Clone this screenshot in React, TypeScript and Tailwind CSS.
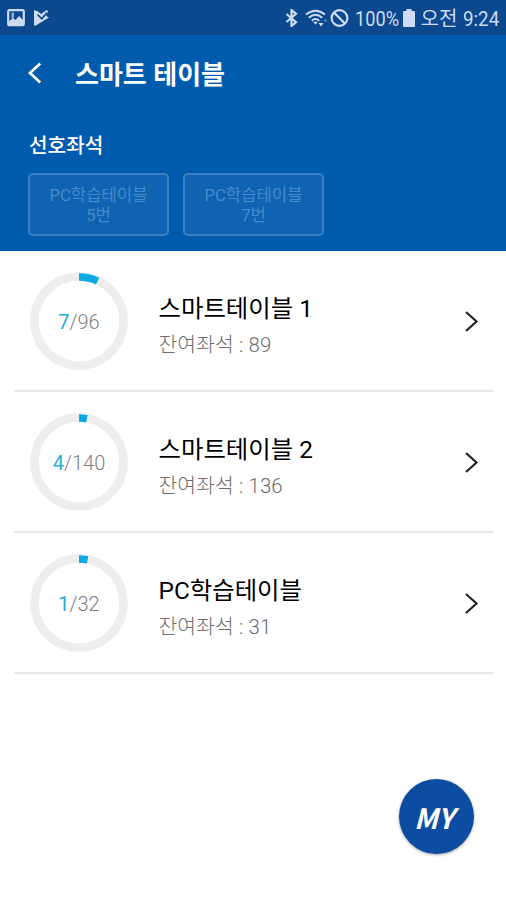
const tables = [
  { name: '스마트테이블 1', used: 7, total: 96, left: 89, arc: 25 },
  { name: '스마트테이블 2', used: 4, total: 140, left: 136, arc: 10.3 },
  { name: 'PC학습테이블', used: 1, total: 32, left: 31, arc: 11.3 },
]

const favorites = ['5번', '7번']

function StatusBar() {
  return (
    <div className="flex h-[35px] items-center bg-[#0c488d] text-[#cddcf2]">
      <svg className="ml-[7px] h-[18px] w-[18px]" viewBox="0 0 18 18">
        <rect x="1.2" y="1.2" width="15.6" height="15" rx="1.2" fill="none" stroke="currentColor" strokeWidth="2.2" />
        <path d="M2 12.500l4-3.500 2.500 2L12 7l4 4V16H2z" fill="currentColor" />
        <path d="M4.500 3.500h2.500v5l-2.500 1.500z" fill="currentColor" opacity=".7" />
      </svg>
      <svg className="ml-[9px] h-[18px] w-[16px]" viewBox="0 0 16 18">
        <path d="M0 1l4 1.500 3 2.500L12.500 1l1.800 1.600-2.500 4.100 3.200 1.800L1.800 16.500H0z" fill="currentColor" />
        <path d="M3.500 5.500l4.300 4.200L13 3.500" fill="none" stroke="#0c488d" strokeWidth="1.600" />
      </svg>
      <svg className="ml-[235px] h-[18px] w-[13px]" viewBox="0 0 13 18">
        <path d="M1.500 5l9.500 8.200L6.500 17V1L11 4.800 1.500 13" fill="none" stroke="currentColor" strokeWidth="2.200" />
      </svg>
      <svg className="ml-[7px] h-[18px] w-[23px]" viewBox="0 0 23 18">
        <g fill="none" stroke="currentColor" strokeWidth="1.900">
          <path d="M1 5.500Q10.500-2 20 5.500" />
          <path d="M3.800 8.700Q10.500 3 17.200 8.700" />
          <path d="M6.800 11.800Q10.500 8.300 14.200 11.800" />
        </g>
        <path d="M8.300 13.300Q10.500 11.500 12.700 13.300L10.500 15.500z" fill="currentColor" />
        <path d="M13.500 14h5L16 17.500z" fill="currentColor" />
        <path d="M18.500 12.500L20.500 9.500l2 3z" fill="currentColor" opacity=".4" />
      </svg>
      <svg className="ml-[1.500px] h-[20px] w-[19px]" viewBox="0 0 19 20">
        <circle cx="9.500" cy="10" r="7.900" fill="none" stroke="currentColor" strokeWidth="2.200" />
        <path d="M4 4.500l11 11" stroke="currentColor" strokeWidth="2.200" />
      </svg>
      <span className="mt-[3px] ml-[6px] w-[47px] origin-left scale-x-[.91] text-[20px] leading-none whitespace-nowrap">
        100%
      </span>
      <svg className="ml-px h-[18px] w-[12px]" viewBox="0 0 12 18">
        <path d="M3.500 0h5v2H11q1 0 1 1v14q0 1-1 1H1q-1 0-1-1V3q0-1 1-1h2.500z" fill="currentColor" />
      </svg>
      <span className="mt-[3px] ml-[6px] w-[36px] text-[20px] leading-none whitespace-nowrap">오전</span>
      <span className="mt-[3px] ml-[6px] origin-left scale-x-[.94] text-[20px] leading-none whitespace-nowrap">
        9:24
      </span>
    </div>
  )
}

function SeatRing({ used, total, arc }: { used: number; total: number; arc: number }) {
  return (
    <div className="grid h-[98px] w-[98px] shrink-0 place-items-center">
      <svg className="col-start-1 row-start-1 h-[98px] w-[98px]" viewBox="0 0 98 98" fill="none">
        <circle cx="49" cy="49" r="44.500" stroke="#eeeeee" strokeWidth="8.500" />
        <circle
          cx="49"
          cy="49"
          r="44"
          stroke="#0ca9e2"
          strokeWidth="7.500"
          pathLength="360"
          strokeDasharray={`${arc} 360`}
          transform="rotate(-90 49 49)"
        />
      </svg>
      <span className="col-start-1 row-start-1 pt-[3px] text-[20px] leading-none font-light text-[#808080]">
        <span className="font-normal text-[#29abe2]">{used}</span>/{total}
      </span>
    </div>
  )
}

export default function App() {
  return (
    <div className="flex h-[900px] w-[506px] flex-col bg-white font-['Roboto','Noto_Sans_CJK_KR',sans-serif]">
      <StatusBar />

      <header className="h-[216px] bg-[#005bac] text-white">
        <div className="flex h-[75px] items-center">
          <svg className="ml-[27px] h-[22px] w-[15px]" viewBox="0 0 15 22" fill="none">
            <path d="M13.200 1.500L3 11l10.200 9.500" stroke="currentColor" strokeWidth="2.700" />
          </svg>
          <h1 className="mt-[5px] ml-[33px] text-[26px] leading-none font-bold">스마트 테이블</h1>
        </div>
        <h2 className="mt-[25px] ml-[29px] text-[20.200px] leading-[22px] font-medium">선호좌석</h2>
        <div className="mt-[16px] ml-[28px] flex gap-[14px]">
          {favorites.map((seat) => (
            <button
              key={seat}
              className="flex h-[63px] w-[141px] flex-col items-center justify-center rounded-[5px] border-2 border-[#3a80c3] bg-[#0f63b1] pt-[3px] text-[16.700px] leading-[20px] text-[#468aca]"
            >
              <span>PC학습테이블</span>
              <span>{seat}</span>
            </button>
          ))}
        </div>
      </header>

      <main className="flex-1 pr-[13px] pl-[14px]">
        {tables.map((table) => (
          <div key={table.name} className="flex h-[141px] items-center border-b-2 border-[#e8e8e8] pl-[16px]">
            <SeatRing used={table.used} total={table.total} arc={table.arc} />
            <div className="ml-[30.500px] flex-1 pt-[11px]">
              <p className="text-[24.400px] leading-[38px] text-black">{table.name}</p>
              <p className="text-[20.400px] leading-[35px] font-light tracking-[.1px] text-[#6c6c6c]">
                잔여좌석 : {table.left}
              </p>
            </div>
            <svg className="mr-[14px] h-[22px] w-[15px]" viewBox="0 0 15 22" fill="none">
              <path d="M2 2L12.500 11.500 2 21" stroke="#222" strokeWidth="2.200" />
            </svg>
          </div>
        ))}
      </main>

      <button className="mr-[32px] mb-[46px] flex h-[75px] w-[75px] items-center justify-center self-end rounded-full bg-[#0c4da2] pr-[5px] font-['Noto_Sans_CJK_KR',sans-serif] text-[28px] leading-none font-bold text-white italic shadow-[0_1px_3px_rgba(0,0,0,0.35)]">
        MY
      </button>
    </div>
  )
}
